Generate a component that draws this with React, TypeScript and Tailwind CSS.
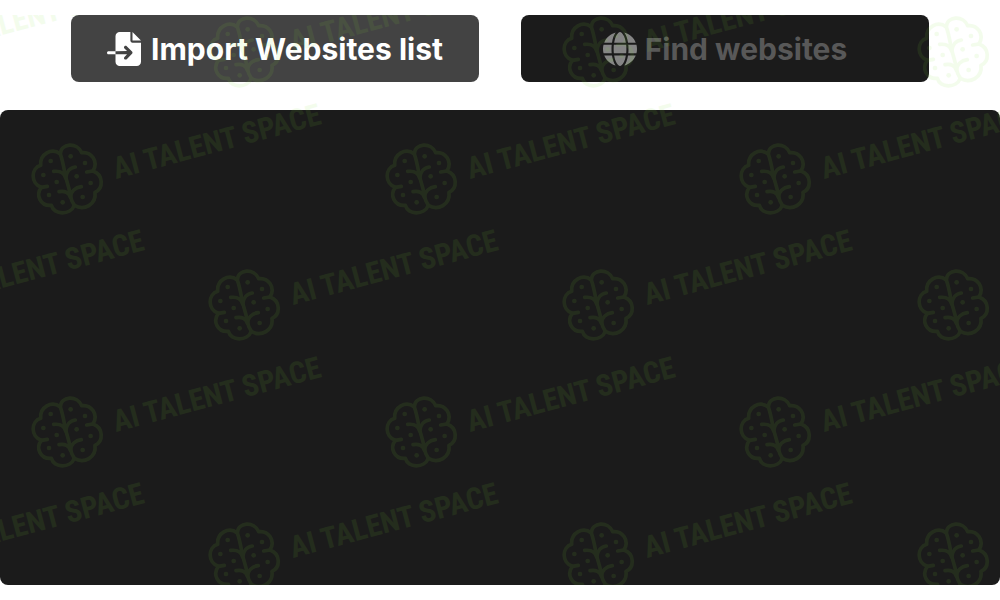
import { FaFileImport, FaGlobe } from 'react-icons/fa6';

const MARK_ROWS = [
  { y: 52, xs: [-110, 244, 598, 953] },
  { y: 179, xs: [67, 421, 775] },
  { y: 305, xs: [-110, 244, 598, 953] },
  { y: 432, xs: [67, 421, 775] },
  { y: 558, xs: [-110, 244, 598, 953] },
];

const BRAIN_DOTS = [
  [84, 97], [144, 83], [187, 103], [62, 139], [102, 160],
  [162, 143], [204, 163], [79, 199], [120, 221], [180, 205],
];

function Brain() {
  return (
    <g transform="scale(0.333) translate(-133 -151)">
      <g fill="none" stroke="currentColor" strokeWidth="11" strokeLinecap="round" strokeLinejoin="round">
        <path d="M113 76 C114 43 164 39 177 72 C206 68 229 99 211 127 C243 138 243 180 217 191 C222 227 184 248 155 230 C143 260 94 260 86 230 C53 233 38 199 56 176 C23 165 24 119 54 110 C51 76 87 56 113 76 Z" />
        <path d="M113 76 C119 92 122 108 126 130 C130 154 140 178 143 199 C145 213 149 222 155 230" />
        <path d="M93 128 C112 126 125 134 129 148 C131 130 142 117 158 115" />
        <path d="M109 189 C127 185 140 193 143 206 C145 188 158 176 176 174" />
        <path d="M211 127 L192 130" />
        <path d="M56 176 L74 173" />
      </g>
      {BRAIN_DOTS.map(([cx, cy]) => (
        <circle key={`${cx}-${cy}`} cx={cx} cy={cy} r="7" fill="currentColor" />
      ))}
    </g>
  );
}

function Watermark() {
  return (
    <div className="pointer-events-none absolute inset-x-0 top-[15px] bottom-0 overflow-hidden" aria-hidden="true">
      <svg className="h-full w-full text-[#84e038] opacity-[0.09]">
        {MARK_ROWS.map(({ y, xs }) =>
          xs.map((x) => (
            <g key={`${x}-${y}`} transform={`translate(${x} ${y - 15})`}>
              <Brain />
              <text
                transform="translate(49 0) rotate(-15)"
                fill="currentColor"
                className="font-['Liberation_Sans_Narrow','Roboto_Condensed','Roboto',sans-serif] text-[30px] font-bold"
              >
                AI TALENT SPACE
              </text>
            </g>
          ))
        )}
      </svg>
    </div>
  );
}

export default function App() {
  return (
    <main className="relative bg-white pt-[15px] font-['Inter',sans-serif]">
      {/* Actions */}
      <div className="grid grid-cols-2 gap-[42px] px-[71px]">
        <button
          type="button"
          className="flex h-[67px] items-center justify-center gap-2.5 rounded-lg bg-[#434343] text-3xl font-bold text-white"
        >
          <FaFileImport className="size-[34px]" />
          Import Websites list
        </button>
        <button
          type="button"
          disabled
          className="flex h-[67px] items-center justify-center gap-2 rounded-lg bg-[#1b1b1b] text-3xl font-bold text-[#585858]"
        >
          <FaGlobe className="size-[34px] text-[#858585]" />
          Find websites
        </button>
      </div>

      {/* Results */}
      <section className="mt-7 h-[475px] rounded-lg bg-[#1b1b1b]" aria-label="Websites" />

      <Watermark />
    </main>
  );
}
